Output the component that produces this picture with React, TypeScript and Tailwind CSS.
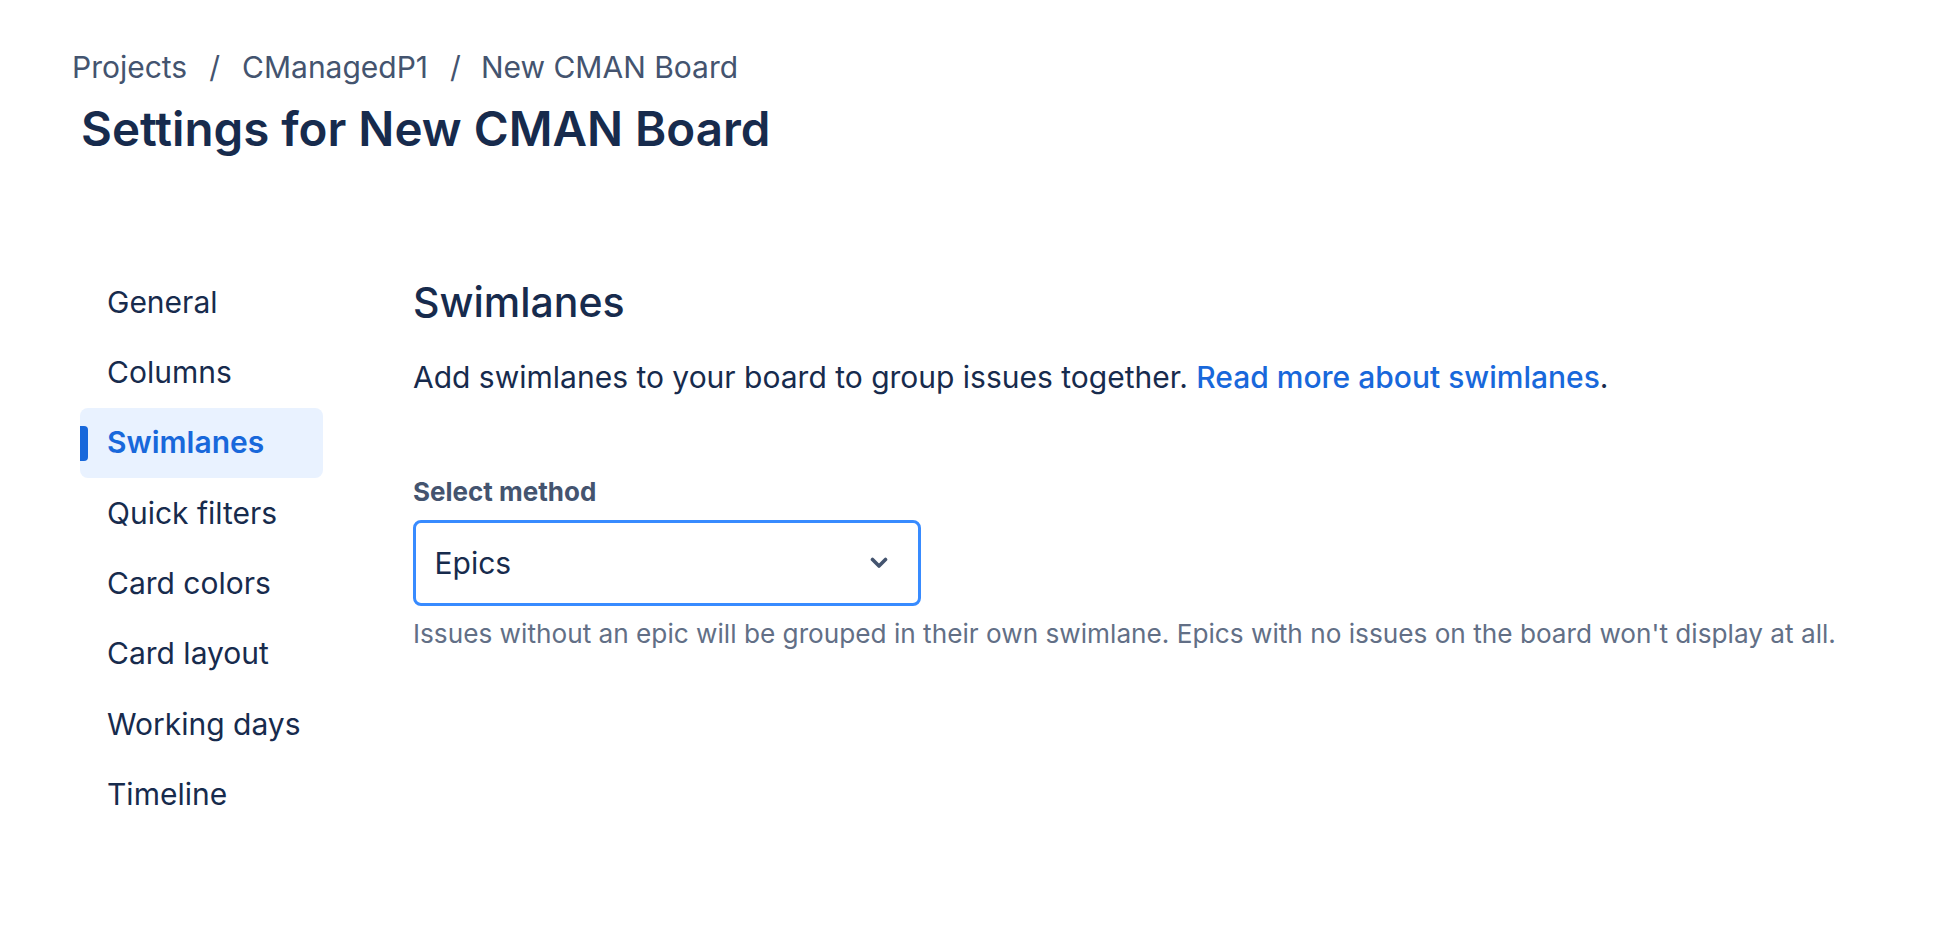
import React from "react";

const items = [
  "General",
  "Columns",
  "Swimlanes",
  "Quick filters",
  "Card colors",
  "Card layout",
  "Working days",
  "Timeline",
];

export default function App() {
  return (
    <div className="min-h-screen w-full bg-white font-['Inter','Noto_Sans',sans-serif] text-[#172B4D] pl-[72px] pt-[47px]">
      <nav className="flex items-center text-[30px] leading-[40px] text-[#44546F]">
        <span>Projects</span>
        <span className="mx-[22px]">/</span>
        <span>CManagedP1</span>
        <span className="ml-[22px] mr-[20px]">/</span>
        <span>New CMAN Board</span>
      </nav>
      <h1 className="ml-[9px] mt-[14px] text-[47.5px] leading-[56px] font-semibold text-[#172B4D]">
        Settings for New CMAN Board
      </h1>
      <div className="mt-[110px] flex">
        <div className="ml-[8px] flex w-[243px] flex-col">
          {items.map((it) => {
            const active = it === "Swimlanes";
            return (
              <div
                key={it}
                className={
                  active
                    ? "relative flex h-[70.35px] items-center rounded-[8px] bg-[#E9F2FF] pl-[27px] text-[30px] font-semibold text-[#1868DB]"
                    : "relative flex h-[70.35px] items-center pl-[27px] text-[30px] text-[#172B4D]"
                }
              >
                {active && (
                  <span className="absolute left-0 top-[18px] h-[35px] w-[8px] rounded-r-[4px] bg-[#1868DB]" />
                )}
                {it}
              </div>
            );
          })}
        </div>
        <div className="ml-[90px] flex flex-col">
          <h2 className="mt-[11px] text-[41px] leading-[48px] font-medium text-[#172B4D]">
            Swimlanes
          </h2>
          <p className="mt-[31px] text-[30px] leading-[40px] text-[#172B4D]">
            Add swimlanes to your board to group issues together.{" "}
            <span className="font-medium text-[#1868DB]">Read more about swimlanes</span>.
          </p>
          <label className="mt-[79px] text-[26px] leading-[32px] font-bold text-[#44546F]">
            Select method
          </label>
          <div className="mt-[12px] flex h-[86px] w-[508px] items-center justify-between rounded-[8px] border-[3.5px] border-[#388BFF] pl-[18.5px] pr-[30px]">
            <span className="text-[30px] text-[#172B4D]">Epics</span>
            <svg width="18" height="12" viewBox="0 0 18 12" fill="none">
              <path d="M2.5 2.5 L9 9 L15.5 2.5" stroke="#44546F" strokeWidth="3.6" strokeLinecap="round" strokeLinejoin="round" />
            </svg>
          </div>
          <p className="mt-[12px] text-[26.2px] leading-[32px] text-[#626F86]">
            Issues without an epic will be grouped in their own swimlane. Epics with no issues on the board won't display at all.
          </p>
        </div>
      </div>
    </div>
  );
}
